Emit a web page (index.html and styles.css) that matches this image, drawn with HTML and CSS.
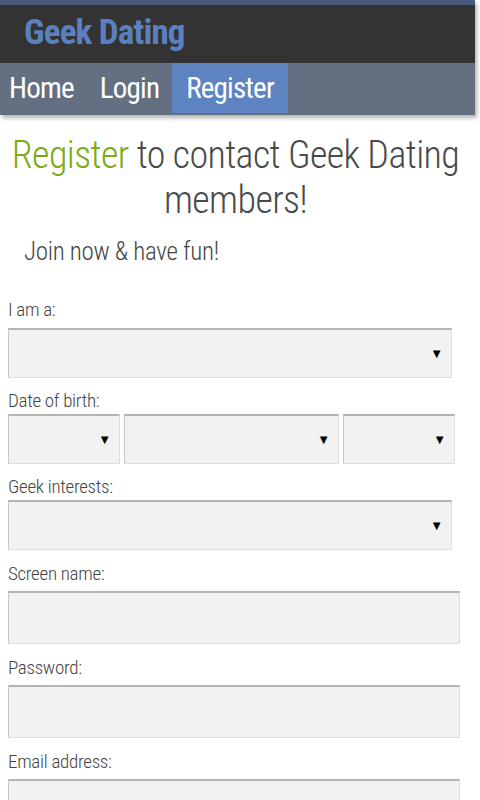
FILE: index.html
```html
<!DOCTYPE html>
<html lang="en">
<head>
    <meta charset="UTF-8">
    <meta name="viewport" content="width=device-width, initial-scale=1.0">
    <title>Geek Dating - Register</title>
    <link rel="stylesheet" href="styles.css">
</head>
<body>
    <div class="header">
        <div class="brand">Geek Dating</div>
        <ul class="nav">
            <li><a href="#">Home</a></li>
            <li><a href="#">Login</a></li>
            <li class="active"><a href="#">Register</a></li>
        </ul>
    </div>

    <div class="content">
        <h1><span class="green">Register</span> to contact Geek Dating members!</h1>
        <p class="intro">Join now &amp; have fun!</p>

        <form class="signup">
            <div class="field first">
                <label>I am a:</label>
                <div class="select"><select></select></div>
            </div>
            <div class="field">
                <label>Date of birth:</label>
                <div class="dob">
                    <div class="select day"><select></select></div>
                    <div class="select month"><select></select></div>
                    <div class="select year"><select></select></div>
                </div>
            </div>
            <div class="field">
                <label>Geek interests:</label>
                <div class="select"><select></select></div>
            </div>
            <div class="field text">
                <label>Screen name:</label>
                <input type="text">
            </div>
            <div class="field text">
                <label>Password:</label>
                <input type="password">
            </div>
            <div class="field text">
                <label>Email address:</label>
                <input type="email">
            </div>
        </form>
    </div>
</body>
</html>
```

FILE: styles.css
```css
body {
    font-family: Roboto, 'Liberation Sans', sans-serif;
    font-stretch: 75%;
    margin: 0;
    background: #fff;
    color: #444;
}

.header {
    width: 475px;
    border-top: 5px solid #485a7c;
    background: #333;
    box-shadow: 2px 3px 4px rgba(0,0,0,0.3);
}

.brand {
    height: 58px;
    line-height: 56px;
    padding-left: 24px;
    font-size: 35px;
    font-weight: 700;
    letter-spacing: -0.8px;
    color: #5b80bf;
}

.nav {
    display: flex;
    list-style: none;
    margin: 0;
    padding: 0;
    height: 52px;
    background: #647082;
}

.nav a {
    display: block;
    padding: 0 13px;
    line-height: 50px;
    font-size: 29px;
    letter-spacing: -0.8px;
    color: #fff;
    text-decoration: none;
}

.nav li:first-child a {
    padding-left: 9px;
}

.nav li.active a {
    padding: 0 14px;
    background: #5d84c0;
}

.content {
    padding: 0 17px 0 8px;
}

h1 {
    margin: 18px 0 0;
    font-size: 38px;
    font-weight: 300;
    line-height: 45px;
    letter-spacing: -0.6px;
    text-align: center;
    color: #4a4a4a;
}

.green {
    color: #7aab14;
}

.intro {
    margin: 14px 0 0 16px;
    font-size: 25px;
    font-weight: 300;
    letter-spacing: -0.3px;
    color: #444;
}

.signup {
    margin-top: 33px;
}

.field {
    margin-top: 12px;
}

.field label {
    display: block;
    font-size: 19px;
    font-weight: 300;
    line-height: 22px;
    letter-spacing: -0.3px;
    color: #444;
    margin-bottom: 2px;
}

.field.first {
    margin-top: 0;
}

.field.first label {
    margin-bottom: 7px;
}

.field.text {
    margin-top: 13px;
}

.field.text label {
    margin-bottom: 6px;
}

.select {
    position: relative;
    width: 444px;
}

.select::after {
    content: "\25BC";
    position: absolute;
    right: 9px;
    top: 50%;
    transform: translateY(-50%);
    font-size: 13px;
    color: #000;
    pointer-events: none;
}

select, input {
    display: block;
    box-sizing: border-box;
    width: 100%;
    height: 50px;
    margin: 0;
    background: #f2f2f2;
    border: 1px solid #ddd;
    border-top: 2px solid #b4b4b4;
    border-left-color: #c8c8c8;
    border-radius: 0;
    -webkit-appearance: none;
    appearance: none;
    font: inherit;
}

input {
    width: 452px;
    height: 53px;
}

.dob {
    display: flex;
    gap: 4px;
}

.select.day {
    width: 112px;
}

.select.month {
    width: 215px;
}

.select.year {
    width: 112px;
}
```
